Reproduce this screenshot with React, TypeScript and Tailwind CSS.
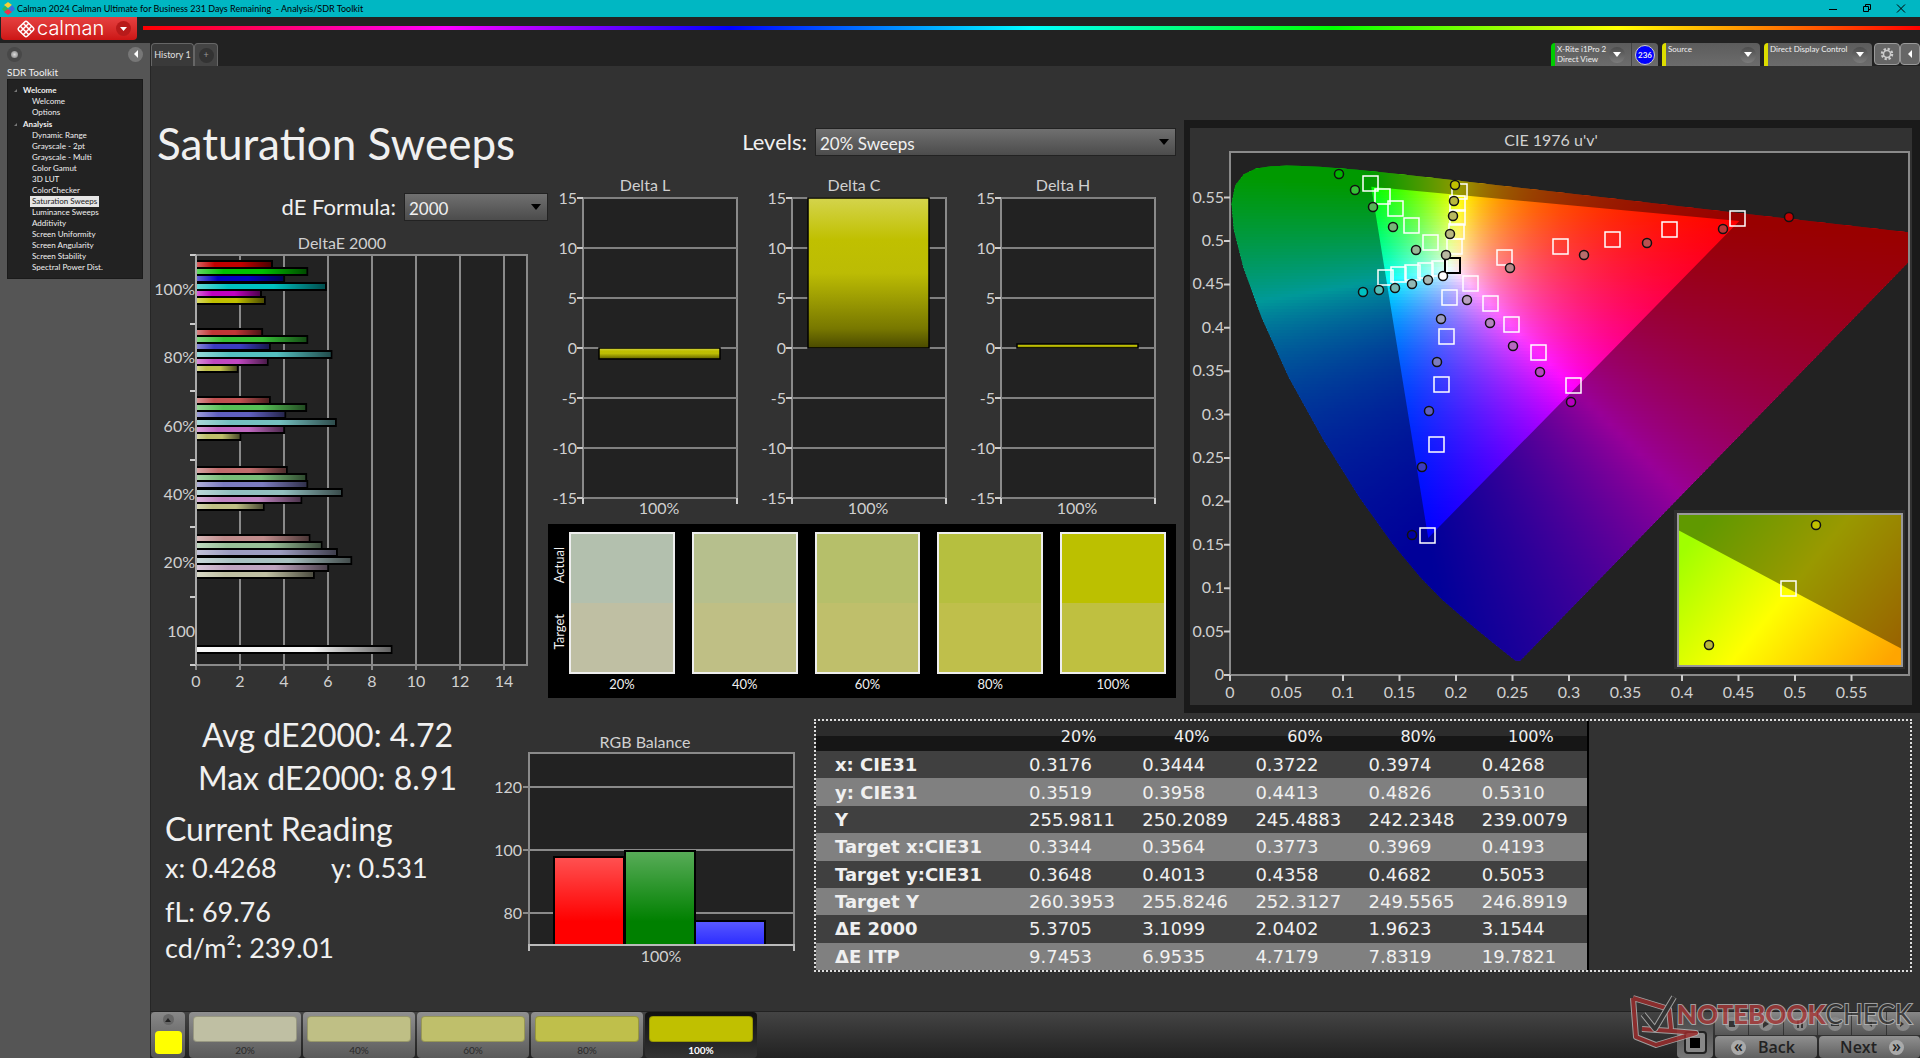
import React, { useState } from "react";

const navGroups = [
  { title: "Welcome", items: ["Welcome", "Options"] },
  {
    title: "Analysis",
    items: [
      "Dynamic Range",
      "Grayscale - 2pt",
      "Grayscale - Multi",
      "Color Gamut",
      "3D LUT",
      "ColorChecker",
      "Saturation Sweeps",
      "Luminance Sweeps",
      "Additivity",
      "Screen Uniformity",
      "Screen Angularity",
      "Screen Stability",
      "Spectral Power Dist.",
    ],
  },
];

const deltaGroups = [
  {
    label: "100%",
    top: 27,
    labelY: 61,
    values: [3.5, 5.1, 4.05, 5.95, 3, 3.17],
    colors: ["#c00000", "#00c000", "#0000c0", "#00c0c0", "#c000c0", "#c0c000"],
  },
  {
    label: "80%",
    top: 95,
    labelY: 129,
    values: [3.05, 5.1, 3.4, 6.2, 3.3, 1.93],
    colors: ["#c03636", "#36c036", "#3c3cc0", "#54c0c0", "#c048c0", "#c0c04b"],
  },
  {
    label: "60%",
    top: 163,
    labelY: 198,
    values: [3.4, 5.05, 4.1, 6.4, 4.05, 2.06],
    colors: ["#c05050", "#56c056", "#6060c0", "#74c0c0", "#c068c0", "#c0c06b"],
  },
  {
    label: "40%",
    top: 233,
    labelY: 266,
    values: [4.17, 5.05, 5.1, 6.67, 4.83, 3.12],
    colors: ["#c06c6c", "#78bd78", "#7c7cc0", "#92c0c0", "#c084c0", "#c0c085"],
  },
  {
    label: "20%",
    top: 301,
    labelY: 334,
    values: [5.2, 5.75, 6.45, 7.1, 6.05, 5.4],
    colors: ["#c08c8c", "#98c098", "#9c9cc0", "#a8c0c0", "#c0a4c0", "#c0c0a3"],
  },
  { label: "100", top: 412, labelY: 403, values: [8.93], colors: ["#f4f4f4"] },
];

const swatches = [
  { label: "20%", actual: "#b3c0ae", target: "#bfbfa3" },
  { label: "40%", actual: "#b6bf8d", target: "#bfbf85" },
  { label: "60%", actual: "#b6bf6a", target: "#bfbf6b" },
  { label: "80%", actual: "#b6bf3f", target: "#bfbf4b" },
  { label: "100%", actual: "#bcc000", target: "#bfc040" },
];

const tableRows = [
  ["x: CIE31", "0.3176", "0.3444", "0.3722", "0.3974", "0.4268"],
  ["y: CIE31", "0.3519", "0.3958", "0.4413", "0.4826", "0.5310"],
  ["Y", "255.9811", "250.2089", "245.4883", "242.2348", "239.0079"],
  ["Target x:CIE31", "0.3344", "0.3564", "0.3773", "0.3969", "0.4193"],
  ["Target y:CIE31", "0.3648", "0.4013", "0.4358", "0.4682", "0.5053"],
  ["Target Y", "260.3953", "255.8246", "252.3127", "249.5565", "246.8919"],
  ["ΔE 2000", "5.3705", "3.1099", "2.0402", "1.9623", "3.1544"],
  ["ΔE ITP", "9.7453", "6.9535", "4.7179", "7.8319", "19.7821"],
];

// spectral locus in CIE 1931 xy
const locus = [
  [0.1741, 0.005], [0.1714, 0.0051], [0.1644, 0.0109], [0.1566, 0.0177], [0.144, 0.0297],
  [0.1355, 0.0399], [0.1241, 0.0578], [0.1096, 0.0868], [0.0913, 0.1327], [0.0687, 0.2007],
  [0.0454, 0.295], [0.0235, 0.4127], [0.0082, 0.5384], [0.0039, 0.6548], [0.0139, 0.7502],
  [0.0389, 0.812], [0.0743, 0.8338], [0.1142, 0.8262], [0.1547, 0.8059], [0.1929, 0.7816],
  [0.2296, 0.7543], [0.3016, 0.6923], [0.3731, 0.6245], [0.4441, 0.5547], [0.5125, 0.4866],
  [0.5752, 0.4242], [0.627, 0.3725], [0.6915, 0.3083], [0.7347, 0.2653],
];

const targets = [
  [181, 56], [193, 69], [206, 81], [222, 98], [241, 115],
  [270, 64], [268, 76], [268, 90], [267, 104], [265, 119],
  [196, 150], [209, 147], [223, 145], [236, 143], [250, 141],
  [281, 156], [301, 176], [322, 197], [349, 225], [384, 258],
  [260, 170], [257, 209], [252, 257], [247, 317], [238, 408],
  [315, 130], [371, 119], [423, 112], [480, 102], [548, 91],
];

const measured: [number, number, string][] = [
  [149, 46, "#00b400"], [165, 62, "#36c036"], [183, 79, "#56b456"], [203, 99, "#78b478"], [226, 122, "#98b898"],
  [265, 57, "#c0c000"], [264, 73, "#b8b83c"], [263, 88, "#b8b860"], [260, 106, "#b8b880"], [256, 127, "#b8b8a0"],
  [173, 164, "#00c0c0"], [189, 162, "#54c0b8"], [205, 160, "#74b8b0"], [222, 156, "#92b8b4"], [238, 152, "#a8b8b4"],
  [253, 148, "#ffffff"],
  [277, 172, "#b8a0c0"], [300, 195, "#b484c0"], [323, 218, "#b868c0"], [350, 244, "#b848c0"], [381, 274, "#b800c0"],
  [251, 191, "#9c9cc0"], [247, 234, "#7c7cc0"], [239, 283, "#6060c0"], [232, 339, "#3c3cc0"], [222, 407, "#0000a0"],
  [320, 140, "#b88c8c"], [394, 127, "#b86c6c"], [457, 115, "#b85050"], [533, 101, "#b83636"], [599, 89, "#c00000"],
];

const px = (u: number) => 40 + 1130 * u;
const py = (v: number) => 547 - 868 * v;

function locusPath() {
  return (
    locus
      .map(([x, y], i) => {
        const d = -2 * x + 12 * y + 3;
        return `${i ? "L" : "M"}${px((4 * x) / d).toFixed(1)} ${py((9 * y) / d).toFixed(1)}`;
      })
      .join(" ") + "Z"
  );
}

function colorAt(cx: number, cy: number) {
  const u = (cx - 40) / 1130;
  const v = Math.max((547 - cy) / 868, 0.01);
  const X = (9 * u) / (4 * v);
  const Z = (12 - 3 * u - 20 * v) / (4 * v);
  const rgb = [
    3.2406 * X - 1.5372 - 0.4986 * Z,
    -0.9689 * X + 1.8758 + 0.0415 * Z,
    0.0557 * X - 0.204 + 1.057 * Z,
  ].map((c) => Math.max(c, 0));
  const max = Math.max(...rgb);
  const out = rgb.map((c) => Math.round((255 * c) / max));
  return `rgb(${out.join(",")})`;
}

const strips = Array.from({ length: 176 }, (_, i) => 22 + i * 3);
const stops = Array.from({ length: 69 }, (_, i) => i / 68);

function TriangleDown({ className = "" }) {
  return (
    <svg className={className} width="10" height="6" viewBox="0 0 10 6" aria-hidden="true">
      <path d="M0 0h10L5 6z" fill="currentColor" />
    </svg>
  );
}

function RoundArrow() {
  return (
    <span className="flex size-4 items-center justify-center rounded-full bg-gradient-to-b from-[#4c4c4c] to-[#7c7c7c] text-white">
      <svg width="8" height="5" viewBox="0 0 8 5" aria-hidden="true">
        <path d="M0 0h8L4 5z" fill="currentColor" />
      </svg>
    </span>
  );
}

function SelectBox({ id, value, className }: { id: string; value: string; className: string }) {
  return (
    <div className={`relative h-[28px] border border-[#222] ${className}`}>
      <select
        id={id}
        className="h-full w-full appearance-none bg-gradient-to-b from-[#707070] to-[#4c4c4c] pl-1 pt-0.5 text-[17px] text-[#f0f0f0] outline-none"
      >
        <option>{value}</option>
      </select>
      <TriangleDown className="pointer-events-none absolute right-1.5 top-2.5 text-black" />
    </div>
  );
}

function TopBar() {
  return (
    <header>
      <div className="flex h-[17px] items-center bg-[#00b7c3] text-black">
        <svg className="ml-0.5" width="13" height="13" viewBox="0 0 13 13" aria-hidden="true">
          <path d="M6 0l4 3-4 3-4-3z" fill="#f5d033" />
          <path d="M3 4l3 3-3 3-3-3z" fill="#2fb457" />
          <path d="M10 3l3 4-3 3-3-3z" fill="#3c6be0" />
          <path d="M6 7l4 3-4 3-4-3z" fill="#e8344e" />
        </svg>
        <span className="ml-0.5 text-[9px]">
          Calman 2024 Calman Ultimate for Business 231 Days Remaining&nbsp; - Analysis/SDR Toolkit
        </span>
        <div className="ml-auto flex items-center gap-[22px] pr-[13px]">
          <button aria-label="Minimize">
            <svg width="12" height="9" viewBox="0 0 12 9"><path d="M2 5.500h8" stroke="#000" /></svg>
          </button>
          <button aria-label="Restore">
            <svg width="12" height="9" viewBox="0 0 12 9">
              <path d="M2.500 2.500h5v5h-5zM4.500 2.500v-2h5v5h-2" fill="none" stroke="#000" />
            </svg>
          </button>
          <button aria-label="Close">
            <svg width="12" height="9" viewBox="0 0 12 9"><path d="M2 .5l8 8M10 .5l-8 8" stroke="#000" /></svg>
          </button>
        </div>
      </div>
      <div className="flex h-[26px] items-start bg-[#222]">
        <button className="ml-px mr-1.5 flex h-[23px] w-[136px] items-center rounded-b-sm bg-gradient-to-b from-[#e64040] to-[#cc1414] pl-4 text-white">
          <svg width="18" height="18" viewBox="0 0 18 18" aria-hidden="true">
            <g fill="none" stroke="#fff" strokeWidth="1.500" transform="rotate(45 9 9)">
              <rect x="3" y="3" width="12" height="12" rx="2" />
              <path d="M7 3v12M11 3v12M3 7h12M3 11h12" />
            </g>
          </svg>
          <span className="ml-0.5 pb-0.5 font-[Inter] text-xl font-light leading-5">calman</span>
          <span className="ml-auto mr-1.5 flex size-[15px] items-center justify-center rounded-full bg-[#b81a1a]">
            <svg width="7" height="4" viewBox="0 0 7 4" aria-hidden="true"><path d="M0 0h7L3.500 4z" fill="#fff" /></svg>
          </span>
        </button>
        <div className="mt-[9px] h-1 flex-1 bg-[linear-gradient(90deg,#f00,#f0f_17%,#00f_33%,#0ff_50%,#0f0_67%,#ff0_83%,#f00)]" />
      </div>
    </header>
  );
}

function Sidebar() {
  const [active, setActive] = useState("Saturation Sweeps");
  return (
    <aside className="w-[151px] shrink-0 border-r border-[#262626] bg-[#555] px-[7px] text-[#f0f0f0]">
      <div className="flex h-[22px] items-center justify-between">
        <span className="flex size-[15px] items-center justify-center rounded-full bg-[#484848]">
          <span className="size-[7px] rounded-full bg-[radial-gradient(#ddd,#777)]" />
        </span>
        <button aria-label="Collapse sidebar" className="flex size-[15px] items-center justify-center rounded-full bg-[#777]">
          <svg width="4" height="8" viewBox="0 0 4 8"><path d="M4 0v8L0 4z" fill="#fff" /></svg>
        </button>
      </div>
      <h2 className="h-[14px] text-[10px] leading-[14px]">SDR Toolkit</h2>
      <nav className="border border-[#1a1a1a] bg-[#222] pb-[5px] pt-1 text-[8px] leading-[11px]">
        {navGroups.map((g) => (
          <div key={g.title}>
            <div className="flex h-3 items-center gap-[6px] pl-1.5 font-bold">
              <svg width="3" height="3" viewBox="0 0 3 3" aria-hidden="true"><path d="M3 0v3H0z" fill="#777" /></svg>
              {g.title}
            </div>
            <ul className="pl-[22px]">
              {g.items.map((item) => (
                <li key={item} className="h-[11px]">
                  <a
                    href="#"
                    onClick={() => setActive(item)}
                    className={item === active ? "block w-fit bg-[#e6e6e6] px-0.5 text-[#222]" : "block w-fit px-0.5"}
                  >
                    {item}
                  </a>
                </li>
              ))}
            </ul>
          </div>
        ))}
      </nav>
    </aside>
  );
}

function TabBar() {
  const box = "flex h-[23px] rounded-t-sm bg-gradient-to-b from-[#5c5c5c] to-[#6c6c6c] text-[8px] leading-[10px] text-[#f0f0f0]";
  return (
    <div className="flex h-[23px] bg-[#222]">
      <button className="h-[23px] w-[43px] rounded-t-sm border border-b-0 border-[#666] bg-[#3a3a3a] text-[9px] text-[#e0e0e0]">
        History 1
      </button>
      <button aria-label="Add history" className="flex h-[23px] w-6 items-center justify-center rounded-t-sm border border-b-0 border-[#666] bg-[#444]">
        <span className="flex size-[15px] items-center justify-center rounded-full bg-[#333] text-[9px] text-[#999]">+</span>
      </button>
      <div className="ml-auto flex gap-1">
        <div className={`${box} w-[107px] border-l-4 border-[#0c0]`}>
          <div className="w-[54px] whitespace-nowrap pl-0.5 pt-px">X-Rite i1Pro 2<br />Direct View</div>
          <button aria-label="Meter menu" className="mr-auto"><RoundArrow /></button>
          <div className="flex w-[27px] items-center justify-center border-l border-[#444]">
            <span className="flex size-5 items-center justify-center rounded-full border border-[#ccc] bg-[#00f] text-[8px] font-bold">236</span>
          </div>
        </div>
        <div className={`${box} w-[98px] border-l-4 border-[#dd0]`}>
          <div className="flex-1 pl-0.5 pt-px">Source</div>
          <button aria-label="Source menu" className="mr-1"><RoundArrow /></button>
        </div>
        <div className={`${box} w-[108px] border-l-4 border-[#dd0]`}>
          <div className="w-[84px] whitespace-nowrap pl-0.5 pt-px">Direct Display Control</div>
          <button aria-label="Display menu"><RoundArrow /></button>
        </div>
        <div className="-ml-0.5 flex">
          <button aria-label="Settings" className="flex h-[22px] w-[26px] items-center justify-center rounded-sm border border-[#999] bg-[#666]">
            <svg width="14" height="14" viewBox="0 0 14 14">
              <circle cx="7" cy="7" r="5" fill="none" stroke="#ccc" strokeWidth="2.500" strokeDasharray="2.200 1.727" />
              <circle cx="7" cy="7" r="3.500" fill="none" stroke="#ccc" strokeWidth="1.500" />
            </svg>
          </button>
          <button aria-label="Expand" className="flex h-[22px] w-5 items-center justify-center rounded-sm border border-[#999] bg-[#666]">
            <svg width="4" height="8" viewBox="0 0 4 8"><path d="M4 0v8L0 4z" fill="#fff" /></svg>
          </button>
        </div>
      </div>
    </div>
  );
}

function DeltaEChart() {
  return (
    <svg viewBox="0 0 397 470" className="block w-full" fontSize="16" fill="#d0d0d0">
      <defs>
        <linearGradient id="shine">
          <stop offset="0" stopColor="#fff" stopOpacity=".4" />
          <stop offset=".25" stopColor="#fff" stopOpacity="0" />
          <stop offset=".6" stopColor="#000" stopOpacity="0" />
          <stop offset="1" stopColor="#000" stopOpacity=".6" />
        </linearGradient>
      </defs>
      <text x="191" y="15" textAnchor="middle">DeltaE 2000</text>
      <rect x="45" y="21" width="331" height="410" fill="#222" stroke="#8a8a8a" strokeWidth="2" />
      {[0, 2, 4, 6, 8, 10, 12, 14].map((n) => (
        <g key={n}>
          <path d={`M${45 + n * 22} 21v415`} stroke="#8a8a8a" strokeWidth="2" />
          <text x={45 + n * 22} y="453" textAnchor="middle">{n}</text>
        </g>
      ))}
      {[21, 90, 157, 226, 293, 363, 431].map((y) => (
        <path key={y} d={`M39 ${y}h6`} stroke="#ccc" strokeWidth="2" />
      ))}
      {deltaGroups.map((g) => (
        <g key={g.label}>
          <text x="44" y={g.labelY} textAnchor="end">{g.label}</text>
          {g.values.map((v, i) => (
            <g key={i}>
              <rect x="45" y={g.top + Math.round(i * 7.2)} width={v * 22 - 1} height="7" fill={g.colors[i]} stroke="#000" strokeWidth="2" />
              <rect x="45" y={g.top + 1 + Math.round(i * 7.2)} width={v * 22 - 2} height="5" fill="url(#shine)" />
            </g>
          ))}
        </g>
      ))}
      <path d="M45 21v410" stroke="#aaa" strokeWidth="2" />
    </svg>
  );
}

function DeltaCharts() {
  const charts = [
    { title: "Delta L", left: 35, y: 175, h: 11 },
    { title: "Delta C", left: 244, y: 25, h: 150 },
    { title: "Delta H", left: 453, y: 171, h: 4 },
  ];
  return (
    <svg viewBox="0 0 636 351" className="block w-full" fontSize="16" fill="#d0d0d0">
      <defs>
        <linearGradient id="yellowBar" x2="0" y2="1">
          <stop offset="0" stopColor="#d4d44c" />
          <stop offset=".28" stopColor="#c0c000" />
          <stop offset=".5" stopColor="#bcbc04" />
          <stop offset=".87" stopColor="#787800" />
          <stop offset="1" stopColor="#4a4a00" />
        </linearGradient>
      </defs>
      {charts.map((c) => (
        <g key={c.title}>
          <text x={c.left + 62} y="18" textAnchor="middle">{c.title}</text>
          <rect x={c.left} y="25" width="154" height="300" fill="#222" stroke="#8a8a8a" strokeWidth="2" />
          {[15, 10, 5, 0, -5, -10, -15].map((n) => (
            <g key={n}>
              <path d={`M${c.left} ${175 - n * 10}h154`} stroke="#808080" strokeWidth="2" />
              <path d={`M${c.left - 6} ${175 - n * 10}h6`} stroke="#ccc" strokeWidth="2" />
              <text x={c.left - 6} y={181 - n * 10} textAnchor="end">{n}</text>
            </g>
          ))}
          <path d={`M${c.left} 325v6M${c.left + 154} 325v6`} stroke="#ccc" strokeWidth="2" />
          <rect x={c.left + 16} y={c.y} width="121" height={c.h} fill="url(#yellowBar)" stroke="#000" strokeWidth="1.500" />
          <text x={c.left + 76} y="341" textAnchor="middle">100%</text>
        </g>
      ))}
    </svg>
  );
}

function SwatchPanel() {
  return (
    <div className="mr-2 flex h-[174px] bg-black pb-3 pl-0.5 pr-2.5 pt-2 text-[13px] text-[#f0f0f0]">
      <div className="flex w-[19px] flex-col justify-around pb-[22px]">
        <span className="rotate-180 [writing-mode:vertical-rl]">Actual</span>
        <span className="rotate-180 [writing-mode:vertical-rl]">Target</span>
      </div>
      <div className="grid flex-1 grid-cols-5 gap-[17px]">
        {swatches.map((s) => (
          <div key={s.label} className="flex flex-col text-center">
            <div className="flex h-[142px] flex-col border-2 border-[#eee]">
              <div className="flex-1" style={{ background: s.actual }} />
              <div className="flex-1" style={{ background: s.target }} />
            </div>
            <span className="leading-5">{s.label}</span>
          </div>
        ))}
      </div>
    </div>
  );
}

function CieChart() {
  const path = locusPath();
  const triangle = `M${px(0.4507)} ${py(0.5229)}L${px(0.125)} ${py(0.5625)}L${px(0.1754)} ${py(0.1579)}Z`;
  const ticks = Array.from({ length: 12 }, (_, i) => i * 0.05);
  return (
    <section className="border-8 border-l-[6px] border-[#1a1a1a]">
      <svg viewBox="0 0 722 577" className="block w-full" fontSize="16" fill="#d0d0d0">
        <defs>
          <clipPath id="plot"><rect x="41" y="25" width="677" height="521" /></clipPath>
          <clipPath id="locus"><path d={path} /></clipPath>
          {strips.map((y) => (
            <linearGradient key={y} id={`row${y}`} gradientUnits="userSpaceOnUse" x1="40" x2="720">
              {stops.map((s) => (
                <stop key={s} offset={s} stopColor={colorAt(40 + s * 680, y + 1)} />
              ))}
            </linearGradient>
          ))}
          <linearGradient id="insetFill" gradientUnits="userSpaceOnUse" x1="498" y1="373" x2="708" y2="543">
            <stop offset=".1" stopColor="#a0ff00" />
            <stop offset=".5" stopColor="#ff0" />
            <stop offset=".95" stopColor="#ffa500" />
          </linearGradient>
        </defs>
        <text x="361" y="18" textAnchor="middle">CIE 1976 u'v'</text>
        <rect x="40" y="24" width="679" height="523" fill="#222" stroke="#8a8a8a" strokeWidth="2" />
        <g clipPath="url(#plot)">
          <g clipPath="url(#locus)">
            {strips.map((y) => (
              <rect key={y} x="40" y={y} width="680" height="4" fill={`url(#row${y})`} />
            ))}
            <path d={`M0 0H722V577H0Z${triangle}`} fill="#000" fillOpacity=".4" fillRule="evenodd" />
          </g>
        </g>
        {ticks.map((t) => (
          <g key={t}>
            <path d={`M${px(t)} 547v6M34 ${py(t)}h6`} stroke="#ccc" strokeWidth="2" />
            <text x={px(t)} y="570" textAnchor="middle">{Number(t.toFixed(2))}</text>
            <text x="34" y={py(t) + 5} textAnchor="end">{Number(t.toFixed(2))}</text>
          </g>
        ))}
        <g fill="none" stroke="#fff" strokeWidth="1.500">
          {targets.map(([x, y]) => (
            <rect key={`${x}-${y}`} x={x - 8} y={y - 8} width="15" height="15" />
          ))}
          <rect x="255" y="130" width="15" height="15" stroke="#000" strokeWidth="2" />
        </g>
        <g stroke="#111" strokeWidth="1.500">
          {measured.map(([x, y, c]) => (
            <circle key={`${x}-${y}`} cx={x} cy={y} r="4.500" fill={c} />
          ))}
        </g>
        <rect x="484" y="382" width="231" height="159" fill="#2e2e2e" />
        <rect x="488" y="386" width="224" height="152" fill="url(#insetFill)" />
        <path d="M488 386h224v135L488 402z" fill="#000" fillOpacity=".4" />
        <rect x="488" y="386" width="224" height="152" fill="none" stroke="#999" strokeWidth="2" />
        <rect x="591" y="453" width="15" height="15" fill="none" stroke="#fff" strokeWidth="1.500" />
        <g stroke="#111" strokeWidth="1.500">
          <circle cx="626" cy="397" r="4.500" fill="#c0c000" />
          <circle cx="519" cy="517" r="4.500" fill="#b8b83c" />
        </g>
      </svg>
    </section>
  );
}

function RgbBalance() {
  const bars = [
    { x: 54, top: 124, color: "#f00" },
    { x: 125, top: 118, color: "#008000" },
    { x: 195, top: 188, color: "#2020ff" },
  ];
  return (
    <svg viewBox="0 0 322 240" className="block w-full" fontSize="16" fill="#d0d0d0">
      <defs>
        <linearGradient id="gloss" gradientUnits="userSpaceOnUse" x1="0" y1="118" x2="0" y2="212">
          <stop offset="0" stopColor="#fff" stopOpacity=".35" />
          <stop offset=".75" stopColor="#fff" stopOpacity="0" />
        </linearGradient>
        <linearGradient id="glossShort" x2="0" y2="1">
          <stop offset="0" stopColor="#fff" stopOpacity=".25" />
          <stop offset="1" stopColor="#fff" stopOpacity=".05" />
        </linearGradient>
      </defs>
      <g transform="translate(8 0)">
        <text x="145" y="15" textAnchor="middle">RGB Balance</text>
        <rect x="29" y="20" width="265" height="192" fill="#222" stroke="#8a8a8a" strokeWidth="2" />
        {[[120, 54], [100, 117], [80, 180]].map(([n, y]) => (
          <g key={n}>
            <path d={`M23 ${y}h271`} stroke="#8a8a8a" strokeWidth="2" />
            <text x="22" y={y + 6} textAnchor="end">{n}</text>
          </g>
        ))}
        {bars.map((b) => (
          <g key={b.x}>
            <rect x={b.x} y={b.top} width="70" height={212 - b.top} fill={b.color} stroke="#000" strokeWidth="2" />
            <rect x={b.x + 1} y={b.top + 1} width="68" height={211 - b.top} fill={b.top > 150 ? "url(#glossShort)" : "url(#gloss)"} />
          </g>
        ))}
        <path d="M28 212h267M29 212v6M294 212v6" stroke="#bbb" strokeWidth="2" />
        <text x="161" y="229" textAnchor="middle">100%</text>
      </g>
    </svg>
  );
}

function Readings() {
  return (
    <section className="whitespace-nowrap pl-3.5 text-[27px] leading-9 text-[#f0f0f0]">
      <div className="w-[325px] text-center text-[32px] leading-[43px]">
        <p>Avg dE2000: 4.72</p>
        <p>Max dE2000: 8.91</p>
      </div>
      <h2 className="pt-2 text-[32px] leading-[43px]">Current Reading</h2>
      <div className="flex">
        <p className="w-[166px]">x: 0.4268</p>
        <p>y: 0.531</p>
      </div>
      <p className="pt-2">fL: 69.76</p>
      <p>cd/m²: 239.01</p>
    </section>
  );
}

function ResultsTable() {
  return (
    <div className="h-[253px] border-2 border-dotted border-[#ddd]">
      <table className="h-full w-[773px] table-fixed border-r-2 border-black font-['DejaVu_Sans'] text-lg text-[#f0f0f0]">
        <thead>
          <tr className="h-[30px] bg-[linear-gradient(#2c2c2c_50%,#161616_50%)]">
            <th className="w-[206px] p-0" aria-label="Measure" />
            {swatches.map((s) => (
              <th key={s.label} scope="col" className="p-0 text-center text-base font-normal leading-[27px]">{s.label}</th>
            ))}
          </tr>
        </thead>
        <tbody>
          {tableRows.map(([name, ...cells]) => (
            <tr key={name} className="bg-[#404040] even:bg-[#808080]">
              <th scope="row" className="whitespace-nowrap p-0 pl-[19px] text-left text-lg font-bold leading-[27px]">{name}</th>
              {cells.map((c) => (
                <td key={c} className="p-0 pl-[7px] leading-[27px]">{c}</td>
              ))}
            </tr>
          ))}
        </tbody>
      </table>
    </div>
  );
}

function Watermark() {
  return (
    <div className="pointer-events-none absolute -top-[18px] right-2 flex items-start opacity-80">
      <svg width="72" height="56" viewBox="0 0 72 56" aria-hidden="true">
        <g fill="none" strokeLinejoin="round">
          <path d="M4 4l36 11 2 20M4 4l3 39 20 8 40-12-24-2-30-2" stroke="#bbb" strokeWidth="6" />
          <path d="M4 4l36 11 2 20M4 4l3 39 20 8 40-12-24-2-30-2" stroke="#a02c2c" strokeWidth="4" />
          <path d="M14 20l12 15L45 3" stroke="#bbb" strokeWidth="6" />
          <path d="M14 20l12 15L45 3" stroke="#333" strokeWidth="4" />
        </g>
      </svg>
      <span className="-ml-6 mt-1 whitespace-nowrap text-[26px] font-black leading-8 text-[#a83838] [-webkit-text-stroke:2px_#bbb] [paint-order:stroke_fill]">
        NOTEBOOK<span className="font-normal text-[#333]">CHECK</span>
      </span>
    </div>
  );
}

function BottomBar() {
  const transport = ["M3 3h6v6H3z", "M3 2l6 4-6 4z", "M3 2h2v8H3zM7 2h2v8H7z", "M2 4h8v4H2z", "M9 3L5 6l4 3z", "M3 3l4 3-4 3z"];
  return (
    <footer className="relative flex h-[47px] border-t border-[#222] bg-gradient-to-b from-[#444] to-[#222]">
      <button aria-label="Show patterns" className="mr-1 flex h-[46px] w-[34px] flex-col items-center justify-between rounded-sm bg-gradient-to-b from-[#888] to-[#555] pb-1 pt-0.5">
        <span className="flex size-[11px] items-center justify-center rounded-full bg-[#666]">
          <svg width="6" height="4" viewBox="0 0 6 4"><path d="M3 0l3 4H0z" fill="#222" /></svg>
        </span>
        <span className="h-[23px] w-[27px] rounded-sm bg-[#ff0]" />
      </button>
      <div className="flex gap-0.5">
        {swatches.map((s, i) => (
          <button
            key={s.label}
            className={
              i === 4
                ? "flex h-[46px] w-[112px] flex-col rounded-sm bg-gradient-to-b from-[#111] to-[#333] px-1 pt-1 text-[10px] font-bold leading-4 text-white"
                : "flex h-[46px] w-[112px] flex-col rounded-sm bg-gradient-to-b from-[#909090] to-[#5a5a5a] px-1 pt-1 text-[10px] leading-4 text-[#2a2a2a]"
            }
          >
            <span className="h-[27px] w-full rounded-sm border border-black/20" style={{ background: i === 4 ? "#c0c000" : s.target }} />
            <span className="w-full text-center">{s.label}</span>
          </button>
        ))}
      </div>
      <div className="ml-auto flex">
        <button aria-label="Stop" className="mr-0.5 flex w-9 items-end justify-center rounded-sm bg-gradient-to-b from-[#444] to-[#777] pb-1">
          <span className="flex size-[23px] items-center justify-center rounded-sm border-2 border-[#222] bg-[#888]">
            <span className="size-2.5 bg-black" />
          </span>
        </button>
        <div className="w-[205px] text-[#222]">
          <div className="grid h-[23px] grid-cols-6 gap-px">
            {transport.map((d) => (
              <button key={d} aria-label="Transport" className="flex items-center justify-center bg-gradient-to-b from-[#888] to-[#555]">
                <svg width="16" height="16" viewBox="-2 -2 16 16">
                  <circle cx="6" cy="6" r="7" fill="#888" />
                  <path d={d} fill="#333" />
                </svg>
              </button>
            ))}
          </div>
          <div className="grid h-[23px] grid-cols-2 gap-0.5 pt-px font-['Open_Sans'] text-base font-semibold leading-5">
            <button className="flex items-center gap-3 rounded-sm bg-gradient-to-b from-[#909090] to-[#606060] pl-4">
              <span className="flex size-[15px] items-center justify-center rounded-full bg-[#aaa] pb-0.5">«</span>Back
            </button>
            <button className="flex items-center justify-end gap-3 rounded-sm bg-gradient-to-b from-[#909090] to-[#606060] pr-4">
              Next<span className="flex size-[15px] items-center justify-center rounded-full bg-[#aaa] pb-0.5">»</span>
            </button>
          </div>
        </div>
      </div>
      <Watermark />
    </footer>
  );
}

export default function App() {
  return (
    <div className="flex min-h-screen flex-col bg-[#222] font-[Lato,sans-serif]">
      <TopBar />
      <div className="flex flex-1">
        <Sidebar />
        <main className="flex min-w-0 flex-1 flex-col bg-[#323232]">
          <TabBar />
          <div className="grid grid-cols-[397fr_636fr_736fr] pt-[54px]">
            <div>
              <h1 className="whitespace-nowrap pl-1.5 text-[44px] leading-[46px] text-[#f0f0f0]">Saturation Sweeps</h1>
              <div className="flex items-center justify-end gap-2 pt-[27px]">
                <label htmlFor="formula" className="text-[22px] leading-7 text-[#f0f0f0]">dE Formula:</label>
                <SelectBox id="formula" value="2000" className="w-[144px]" />
              </div>
              <div className="pt-[13px]"><DeltaEChart /></div>
            </div>
            <div className="pt-2">
              <div className="flex items-center gap-2 pr-2">
                <label htmlFor="levels" className="ml-auto text-[22px] leading-7 text-[#f0f0f0]">Levels:</label>
                <SelectBox id="levels" value="20% Sweeps" className="w-[361px]" />
              </div>
              <div className="pt-[17px]"><DeltaCharts /></div>
              <SwatchPanel />
            </div>
            <CieChart />
          </div>
          <div className="grid flex-1 grid-cols-[341fr_322fr_1106fr]">
            <Readings />
            <div className="pt-5"><RgbBalance /></div>
            <div className="pr-2 pt-1.5"><ResultsTable /></div>
          </div>
          <BottomBar />
        </main>
      </div>
    </div>
  );
}
